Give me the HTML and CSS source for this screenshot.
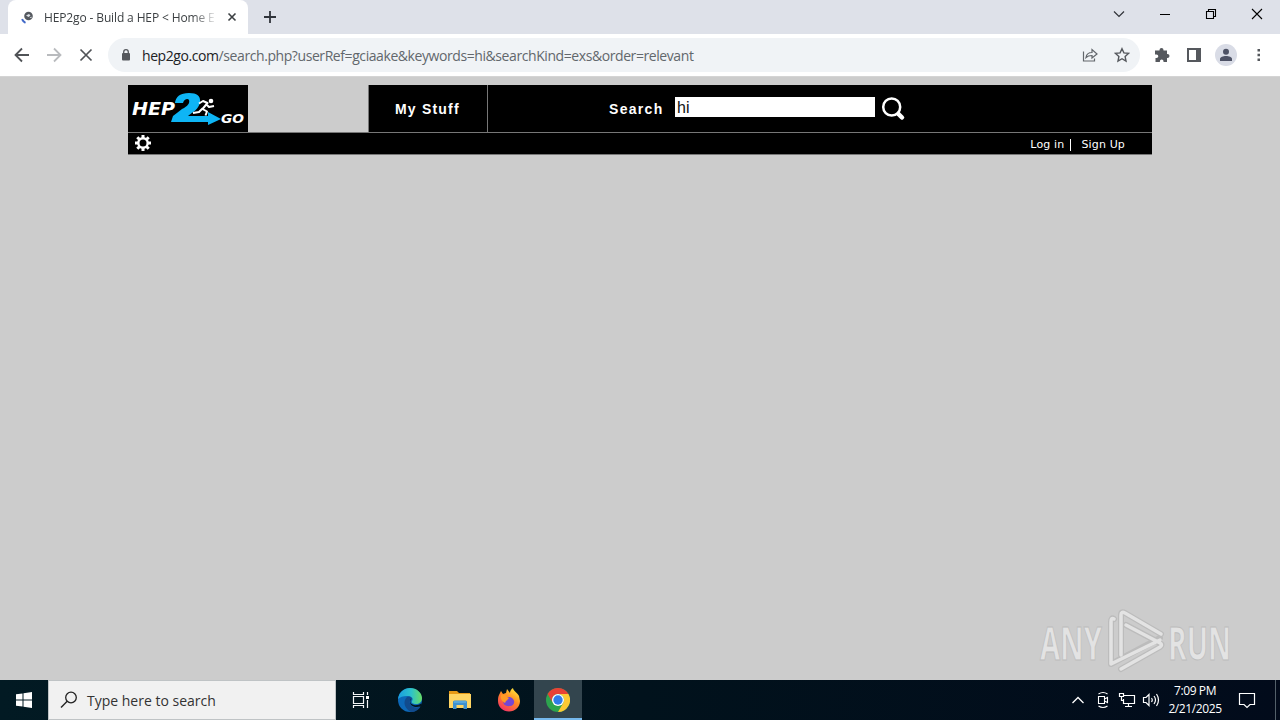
FILE: index.html
```html
<!DOCTYPE html>
<html lang="en">
<head>
<meta charset="utf-8">
<title>HEP2go - Build a HEP</title>
<link rel="stylesheet" href="styles.css">
</head>
<body>
<div class="screen">
  <header class="tabstrip">
    <div class="tab">
      <svg class="favicon" width="14" height="14" viewBox="0 0 14 14"><circle cx="7.500" cy="6" r="4.300" fill="#55595f"/><path d="M5 5.500l3-1.500 1.500 1.500-2 1.500zM8.500 8l2-1.500 0 1.500z" fill="#dfe3e8"/><path d="M1 9.200A7 7 0 0 0 4.500 12.800" fill="none" stroke="#4169c8" stroke-width="2"/></svg>
      <span class="tab-title">HEP2go - Build a HEP &lt; Home E</span>
      <svg class="tab-close" width="10" height="10" viewBox="0 0 10 10"><path d="M1.500 1.500l7 7M8.500 1.500l-7 7" stroke="#3c4043" stroke-width="1.600"/></svg>
    </div>
    <svg class="new-tab" width="12" height="12" viewBox="0 0 12 12"><path d="M6 0v12M0 6h12" stroke="#30343b" stroke-width="1.800"/></svg>
    <div class="window-controls">
      <svg width="12" height="12" viewBox="0 0 12 12"><path d="M1 3.500l5 5 5-5" fill="none" stroke="#303238" stroke-width="1.200"/></svg>
      <svg width="12" height="12" viewBox="0 0 12 12"><path d="M1 6.500h10" stroke="#000"/></svg>
      <svg width="12" height="12" viewBox="0 0 12 12"><path d="M1.500 3.500h7v7h-7zM3.500 3.500v-2h7v7h-2" fill="none" stroke="#000" stroke-width="1.100"/></svg>
      <svg width="12" height="12" viewBox="0 0 12 12"><path d="M1 1l10 10M11 1L1 11" stroke="#000" stroke-width="1.100"/></svg>
    </div>
  </header>
  <div class="toolbar">
    <div class="nav">
      <svg width="16" height="16" viewBox="0 0 16 16"><path d="M15 8H2M8 1.500L1.500 8 8 14.500" fill="none" stroke="#505357" stroke-width="1.800"/></svg>
      <svg width="16" height="16" viewBox="0 0 16 16"><path d="M1 8h13M8 1.500L14.500 8 8 14.500" fill="none" stroke="#b9bbbe" stroke-width="1.800"/></svg>
      <svg width="16" height="16" viewBox="0 0 16 16"><path d="M2.500 2.500l11 11M13.500 2.500l-11 11" stroke="#505357" stroke-width="1.700"/></svg>
    </div>
    <div class="omnibox">
      <svg class="lock" width="10" height="12" viewBox="0 0 10 12"><rect x="1" y="4" width="8" height="7.500" rx="1" fill="#55585d"/><path d="M2.700 5V3a2.300 2.300 0 0 1 4.600 0v2" fill="none" stroke="#55585d" stroke-width="1.300"/></svg>
      <span class="url"><b>hep2go.com</b>/search.php?userRef=gciaake&amp;keywords=hi&amp;searchKind=exs&amp;order=relevant</span>
      <svg class="share" width="16" height="16" viewBox="0 0 16 16"><path d="M1.500 4.500v9.500h11v-2.500M4 10.500c.5-3.500 3-5 6-5V2.500l5 4.500-5 4V8.500c-2.500 0-4.500.5-6 2z" fill="none" stroke="#62666b" stroke-width="1.200"/></svg>
      <svg class="star" width="16" height="16" viewBox="0 0 16 16"><path d="M8 1.700l1.900 4.200 4.600.5-3.400 3.100.9 4.500L8 11.700 4 14l.9-4.500-3.400-3.100 4.600-.5z" fill="none" stroke="#55585d" stroke-width="1.400"/></svg>
    </div>
    <div class="actions">
      <svg width="16" height="16" viewBox="0 0 16 16"><path d="M1 3.500h4.500V3a2 2 0 0 1 4 0v.5H13V7h.5a2 2 0 0 1 0 4H13v4H9.500v-.8a1.800 1.800 0 0 0-3.600 0v.8H1.500v-4h1a1.800 1.800 0 0 0 0-3.600H1z" fill="#55585d"/></svg>
      <svg width="16" height="16" viewBox="0 0 16 16"><path d="M1 1h14v14H1zM3 3v10h7V3z" fill="#55585d" fill-rule="evenodd"/></svg>
      <svg width="22" height="22" viewBox="0 0 22 22"><circle cx="11" cy="11" r="11" fill="#d9dce6"/><circle cx="11" cy="7.700" r="3" fill="#4d5265"/><path d="M5 17v-2c0-4 12-4 12 0v2z" fill="#4d5265"/></svg>
      <svg width="4" height="16" viewBox="0 0 4 16"><path d="M.5 2h2.500v2.500h-2.500zM.5 6.800h2.500v2.500h-2.500zM.5 11.600h2.500v2.500h-2.500z" fill="#55585d"/></svg>
    </div>
  </div>
  <main class="page">
    <div class="site-head">
      <svg class="logo" width="120" height="47" viewBox="0 0 120 47">
        <rect width="120" height="47" fill="#000"/>
        <text class="logo-text" x="4" y="30" font-size="18.500" textLength="43" lengthAdjust="spacingAndGlyphs">HEP</text>
        <path d="M47 18Q48 8 61 8Q73 8 72 17C71 24 65 27 60 31H80V27L93 34 80 40V37H43L45 31Q49 28 54 24C60 21 62 18 61 15C60 13 56 14 55 18Z" fill="#0eb5f5"/>
        <circle cx="83" cy="16" r="2.300" fill="#fff"/>
        <path d="M71 18.500l4-2.500 4.500 2-5 6 4.500 2.500-1.500 4M78 19l3 3 5-1M74.500 23.500l-3.500 3.500-6 1" fill="none" stroke="#fff" stroke-width="2" stroke-linejoin="round"/>
        <text class="logo-text" x="93" y="38" font-size="13" textLength="23" lengthAdjust="spacingAndGlyphs">GO</text>
      </svg>
      <div class="my-stuff">My Stuff</div>
      <div class="search">
        <span class="search-label">Search</span>
        <span class="search-field">hi</span>
        <svg width="26" height="26" viewBox="0 0 26 26"><circle cx="10.700" cy="11" r="8.500" fill="none" stroke="#fff" stroke-width="2.500"/><path d="M17.500 18l3.500 3.500" stroke="#fff" stroke-width="4.500" stroke-linecap="round"/></svg>
      </div>
    </div>
    <div class="sub-head">
      <svg class="gear" width="16" height="16" viewBox="0 0 16 16"><circle cx="8" cy="8" r="4.700" fill="none" stroke="#fff" stroke-width="2.400"/><path d="M8 0v3M8 13v3M0 8h3M13 8h3M2.300 2.300l2 2M11.700 11.700l2 2M2.300 13.700l2-2M11.700 4.300l2-2" stroke="#fff" stroke-width="3"/></svg>
      <span class="login">Log in</span><i class="divider"></i><span class="signup">Sign Up</span>
    </div>
    <svg class="watermark" width="206" height="68" viewBox="0 0 206 68">
      <g class="mark-text"><text x="5" y="53" textLength="62" lengthAdjust="spacingAndGlyphs">ANY</text><text x="133" y="53" textLength="63" lengthAdjust="spacingAndGlyphs">RUN</text></g>
      <g fill="none" stroke-linecap="round" stroke-linejoin="round">
        <path d="M79 12Q76 10 76 15V57L125 31M86 48V8Q86 4 90 6L126 27M91 18L125 36Q128 38 125 40L86 62" stroke="#bcbcbc" stroke-width="6"/>
        <path d="M79 12Q76 10 76 15V57L125 33M86 48V8Q86 4 90 6L126 27M91 18L125 36Q128 38 125 40L86 62" stroke="#e3e3e3" stroke-width="3.500"/>
      </g>
    </svg>
  </main>
  <footer class="taskbar">
    <div class="start"><svg width="16" height="16" viewBox="0 0 16 16"><path d="M0 2.300L6.500 1.400V7.500H0zM7.500 1.200L16 0v7.500H7.500zM0 8.500h6.500v6.100L0 13.700zM7.500 8.500H16V16l-8.500-1.200z" fill="#fff"/></svg></div>
    <div class="task-search">
      <svg width="18" height="18" viewBox="0 0 18 18"><circle cx="11" cy="6.500" r="5.300" fill="none" stroke="#222" stroke-width="1.300"/><path d="M7.200 10.300L1 16.500" stroke="#222" stroke-width="1.400"/></svg>
      <span>Type here to search</span>
    </div>
    <div class="apps">
      <div class="app"><svg width="18" height="18" viewBox="0 0 18 18"><path d="M1.500 1v2.500h10V1M1.500 17v-2.500h10V17M1.500 5.500h10v7h-10zM15.500 1v3M15.500 9v8" fill="none" stroke="#f4f6f7" stroke-width="1.200"/><path d="M14 5h3v3h-3z" fill="#fff"/></svg></div>
      <div class="app"><svg width="24" height="24" viewBox="0 0 24 24">
        <defs><linearGradient id="sea" x1="0" x2="1"><stop stop-color="#199de0"/><stop offset=".55" stop-color="#2dc2cb"/><stop offset="1" stop-color="#68dc65"/></linearGradient></defs>
        <circle cx="12" cy="12" r="12" fill="#0c68b8"/><path d="M0 11C1 4 6 0 12 0c7 0 12 5 12 10 0 4-3 6-6 6-3 0-5-1-4-3 2-3-1-5-5-5-4 0-7 1-9 3z" fill="url(#sea)"/><path d="M9 9c-5 5-2 12 4 15 4 0 8-2 9.500-5.500-4 2-9 1-10.500-3-1-3 2-4 2-5-1-2-3-2-5-1.500z" fill="#114b8d"/><path d="M13.500 11c-3 3 0 6 4 6.200 2.500 0 4-.7 5.500-1.700l.5 1.500-1 1.500C17 20 12 18 12 14c0-2 .5-3 1.500-3z" fill="#03151f"/></svg></div>
      <div class="app"><svg width="22" height="20" viewBox="0 0 22 20"><path d="M0 1h8l2 2h11v4H0z" fill="#e79a16"/><path d="M0 4h22v14H0z" fill="#ffd563"/><path d="M4 19V12q0-1.500 1.500-1.500h11Q18 10.500 18 12v7h-3.500V15h-7v4z" fill="#3e91cf"/><path d="M5 12h12" stroke="#70bde9"/></svg></div>
      <div class="app"><svg width="24" height="24" viewBox="0 0 24 24">
        <defs><linearGradient id="fire" x1=".8" y1="0" x2=".2" y2="1"><stop stop-color="#ffec3d"/><stop offset=".45" stop-color="#ff8a22"/><stop offset="1" stop-color="#f42c6b"/></linearGradient></defs>
        <path d="M2 7l2-4 2 3 3-1 1-4 3 4c0-2 1-4 3-5 0 3 5 5 6 8l1 5c0 6-5 10.500-11 10.500S1 19 1 13c0-2 0-4 1-6z" fill="url(#fire)"/><path d="M7 9c3 1 5-1 8 1 4 3 2 8-2 8-5 1-8-3-6-5l4-1z" fill="#7546d3"/><path d="M4 7c3-1 5 0 6 2l2 1-3 3-1 2c-3-2-5-4-4-8z" fill="#ff9b25"/></svg></div>
      <div class="app active"><svg width="24" height="24" viewBox="0 0 24 24"><circle cx="12" cy="12" r="12" fill="#2da44e"/><path d="M1.600 6A12 12 0 0 1 22.400 6H12a6 6 0 0 0-5.200 9z" fill="#e84135"/><path d="M22.400 6A12 12 0 0 1 12 24l5.200-9A6 6 0 0 0 12 6z" fill="#fcc934"/><circle cx="12" cy="12" r="6" fill="#fff"/><circle cx="12" cy="12" r="4.700" fill="#2f7cea"/></svg></div>
    </div>
    <div class="tray">
      <svg width="14" height="8" viewBox="0 0 14 8"><path d="M1.500 7L7 1.500 12.500 7" fill="none" stroke="#fff" stroke-width="1.300"/></svg>
      <svg width="14" height="18" viewBox="0 0 14 18"><path d="M2.500 5.500h6v7h-6zM8.500 8l3-1.500v5L8.500 10M2.500 3q4.500-3 9 0M2.500 15q4.500 3 9 0" fill="none" stroke="#fff" stroke-width="1.100"/></svg>
      <svg width="18" height="16" viewBox="0 0 18 16"><path d="M6 3.500h10.500v8H5.500V7M10.500 11.500v3M7 14.500h7M1.500 1.500h4v3h-4zM3.500 4.500v4h2" fill="none" stroke="#fff" stroke-width="1.200"/></svg>
      <svg width="18" height="16" viewBox="0 0 18 16"><path d="M1.500 5.500h2.500l3-3v11l-3-3H1.500zM9.500 6q1.500 2 0 4M12 4q3 4 0 8M14.500 2q4 6 0 12" fill="none" stroke="#fff" stroke-width="1.200"/></svg>
      <div class="clock"><span class="time">7:09 PM</span><span class="date">2/21/2025</span></div>
      <svg width="18" height="18" viewBox="0 0 18 18"><path d="M1.500 2.500h15v11H12L9 16.500 6 13.500H1.500z" fill="none" stroke="#fff" stroke-width="1.200"/></svg>
      <i class="peek"></i>
    </div>
  </footer>
</div>
</body>
</html>
```

FILE: styles.css
```css
* { box-sizing: border-box; }
body { margin: 0; }
svg { display: block; flex: none; }
.screen { width: 1280px; height: 720px; overflow: hidden; display: flex; flex-direction: column; background: #ccc; font-family: "Open Sans", "Noto Sans", sans-serif; white-space: nowrap; }
.tabstrip { height: 34px; flex: none; display: flex; align-items: center; background: #dee1e9; padding-left: 8px; }
.tab { width: 240px; height: 34px; display: flex; align-items: center; background: #fff; border-radius: 8px 8px 0 0; padding-left: 13px; }
.tab-title { width: 172px; margin-left: 9px; overflow: hidden; font-size: 12px; letter-spacing: -.13px; color: #3c4043; -webkit-mask-image: linear-gradient(to right, #000 148px, transparent 174px); }
.tab-close { margin-left: 11px; }
.new-tab { margin-left: 16px; }
.window-controls { display: flex; margin-left: auto; gap: 34px; padding-right: 17px; margin-top: -6px; }
.toolbar { height: 43px; flex: none; display: flex; align-items: center; background: #fff; border-bottom: 1px solid #d4d4d4; }
.nav { display: flex; gap: 16px; padding-left: 14px; }
.omnibox { display: flex; align-items: center; width: 1032px; height: 34px; margin-left: 14px; border-radius: 17px; background: #f0f3f6; padding: 0 10px 0 13px; }
.url { margin-left: 11px; font-size: 14px; letter-spacing: -.42px; color: #62676c; }
.url b { font-weight: 400; color: #202124; }
.share { margin-left: auto; }
.star { margin-left: 16px; }
.actions { display: flex; align-items: center; margin-left: 14px; }
.actions svg:nth-child(2) { margin-left: 16px; }
.actions svg:nth-child(3) { margin-left: 13px; }
.actions svg:nth-child(4) { margin-left: 20px; }
.page { height: 603px; flex: none; display: flex; flex-direction: column; padding: 8px 0 5px; }
.site-head { width: 1024px; height: 47px; margin: 0 auto; display: flex; }
.logo-text { font-family: "DejaVu Sans", sans-serif; font-weight: 700; font-style: italic; fill: #fff; }
.my-stuff { width: 120px; margin-left: 120px; background: #000; border: solid #777; border-width: 0 1px; padding-left: 26px; color: #fff; font: 700 14px/49px "Liberation Sans", Arial, sans-serif; letter-spacing: 1.2px; }
.search { flex: 1; display: flex; align-items: flex-start; background: #000; padding: 11px 0 0 121px; color: #fff; font-family: "Liberation Sans", Arial, sans-serif; }
.search-label { width: 66px; font-size: 14px; line-height: 27px; font-weight: 700; letter-spacing: 1.3px; }
.search-field { width: 200px; height: 20px; margin: 1px 6px 0 0; background: #fff; color: #111; padding-left: 2px; font-size: 16px; line-height: 21px; }
.sub-head { width: 1024px; height: 23px; margin: 0 auto; display: flex; align-items: center; background: #000; border: solid #777; border-width: 1px 0; padding: 0 27px 0 7px; color: #fff; font: 11px/20px "DejaVu Sans", sans-serif; letter-spacing: .15px; }
.gear { margin-top: -1px; }
.login { margin-left: auto; padding-top: 3px; }
.divider { width: 1px; height: 12px; margin: 2px 10px 0 6px; background: #fff; }
.signup { padding-top: 3px; }
.watermark { margin: auto 39px 0 auto; }
.mark-text text { font: 700 46px "Open Sans", sans-serif; fill: #e3e3e3; stroke: #bcbcbc; stroke-width: 1px; }
.taskbar { height: 40px; flex: none; display: flex; background: linear-gradient(to right, #021a23, #01121c 50%, #020b1b); color: #fff; }
.start { width: 48px; display: flex; align-items: center; justify-content: center; }
.task-search { width: 288px; display: flex; align-items: center; background: #f1f1f1; border: 1px solid #bfc3c5; padding-left: 11px; color: #333; font-size: 14px; }
.task-search span { margin-left: 9px; }
.apps { display: flex; }
.app { width: 49.500px; display: flex; align-items: center; justify-content: center; }
.app.active { width: 48px; background: #33454e; border-bottom: 2px solid #76b9ed; }
.app.active svg { margin-top: 2px; }
.tray { display: flex; align-items: center; margin-left: auto; }
.tray svg:nth-child(2) { margin-left: 11px; }
.tray svg:nth-child(3) { margin-left: 8px; }
.tray svg:nth-child(4) { margin-left: 6px; }
.clock { width: 70px; display: flex; flex-direction: column; align-items: center; font-size: 12px; line-height: 18px; letter-spacing: -.4px; }
.clock + svg { margin-left: 8px; }
.peek { width: 1px; height: 40px; margin: 0 4px 0 19px; background: #53606a; }
```
